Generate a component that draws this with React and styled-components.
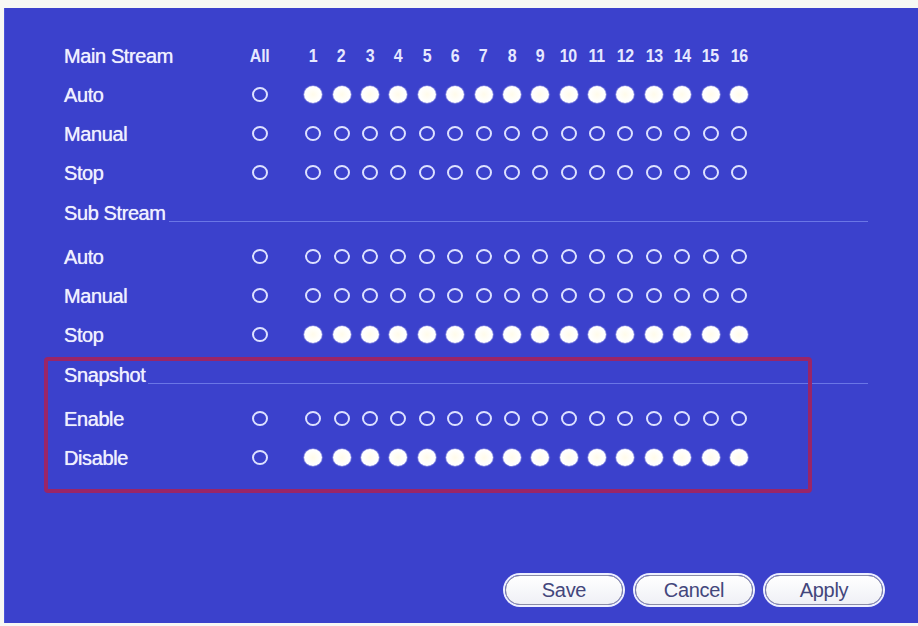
import React from "react";
import styled, { createGlobalStyle } from "styled-components";

const Global = createGlobalStyle`
  html, body { margin: 0; padding: 0; background: #f7f8f4; }
  body { font-family: "Liberation Sans", Arial, sans-serif; }
  * { box-sizing: border-box; }
`;

const Panel = styled.div`
  margin: 8px 0 0 4px;
  height: 615px;
  background: #3b41cc;
  border-left: 1px solid #4a55d8;
  display: flex;
  flex-direction: column;
  padding: 28px 0 0 59px;
`;

const Content = styled.div`
  display: flex;
  flex-direction: column;
  flex: 1;
`;

const Section = styled.div`
  position: relative;
  display: flex;
  flex-direction: column;
`;

const Row = styled.div`
  display: flex;
  align-items: center;
  height: 39px;
`;

const Label = styled.div`
  width: 182px;
  font-size: 20px;
  line-height: 22px;
  color: #eef0ff;
  letter-spacing: -0.4px;
  text-shadow: 0 0 0.7px rgba(255, 255, 255, 0.9);
`;

const AllCell = styled.div`
  width: 28px;
  display: flex;
  justify-content: center;
  align-items: center;
`;

const Channels = styled.div`
  margin-left: 25px;
  display: grid;
  grid-template-columns: repeat(16, 28.4px);
  align-items: center;
  justify-items: center;
`;

const Num = styled.span`
  display: inline-block;
  font-size: 19px;
  line-height: 22px;
  font-weight: 700;
  color: #e6e8ff;
  letter-spacing: -0.3px;
  transform: scaleX(0.84);
  white-space: nowrap;
`;

const Radio = styled.span`
  display: block;
  border-radius: 50%;
  ${(p) =>
    p.$on
      ? `width: 18px; height: 17px; background: radial-gradient(circle, #fffbea 0%, #ffffff 60%, #f4f4ff 100%); box-shadow: 0 0 1px 0.5px rgba(255,255,255,0.6);`
      : `width: 16px; height: 15px; border: 2.3px solid #dde1ff; background: transparent;`}
`;

const HeaderRow = styled.div`
  display: flex;
  align-items: flex-start;
  height: 45px;
  padding-top: 10px;
  width: 804px;
`;

const HeaderLabel = styled.div`
  font-size: 20px;
  line-height: 22px;
  color: #eef0ff;
  letter-spacing: -0.4px;
  text-shadow: 0 0 0.7px rgba(255, 255, 255, 0.9);
`;

const Rule = styled.div`
  flex: 1;
  height: 1px;
  margin-top: 19px;
  margin-left: 3px;
  background: #6a76e6;
`;

const Highlight = styled.div`
  position: absolute;
  left: -20px;
  top: 3px;
  width: 768px;
  height: 136px;
  border: 4px solid #9a2568;
  border-radius: 4px;
  pointer-events: none;
`;

const ButtonBar = styled.div`
  display: flex;
  justify-content: flex-end;
  gap: 12px;
  padding: 0 35px 18px 0;
`;

const Button = styled.button`
  width: 118px;
  height: 30px;
  border-radius: 15px;
  border: 1.5px solid #8a8ca6;
  background: linear-gradient(#ffffff, #eff0f6);
  box-shadow: 0 0 0 2px #eef0ff;
  color: #43467c;
  font-family: "Liberation Sans", Arial, sans-serif;
  font-size: 20px;
  line-height: 26px;
  padding: 0;
  letter-spacing: -0.3px;
`;

const CH = Array.from({ length: 16 }, (_, i) => i + 1);

function ChoiceRow({ label, on }) {
  return (
    <Row>
      <Label>{label}</Label>
      <AllCell>
        <Radio />
      </AllCell>
      <Channels>
        {CH.map((c) => (
          <Radio key={c} $on={on} />
        ))}
      </Channels>
    </Row>
  );
}

function Header({ label }) {
  return (
    <HeaderRow>
      <HeaderLabel>{label}</HeaderLabel>
      <Rule />
    </HeaderRow>
  );
}

export default function App() {
  return (
    <>
      <Global />
      <Panel>
        <Content>
          <Section>
            <Row>
              <Label>Main Stream</Label>
              <AllCell>
                <Num>All</Num>
              </AllCell>
              <Channels>
                {CH.map((c) => (
                  <Num key={c}>{c}</Num>
                ))}
              </Channels>
            </Row>
            <ChoiceRow label="Auto" on />
            <ChoiceRow label="Manual" />
            <ChoiceRow label="Stop" />
          </Section>
          <Section>
            <Header label="Sub Stream" />
            <ChoiceRow label="Auto" />
            <ChoiceRow label="Manual" />
            <ChoiceRow label="Stop" on />
          </Section>
          <Section>
            <Header label="Snapshot" />
            <ChoiceRow label="Enable" />
            <ChoiceRow label="Disable" on />
            <Highlight />
          </Section>
        </Content>
        <ButtonBar>
          <Button>Save</Button>
          <Button>Cancel</Button>
          <Button>Apply</Button>
        </ButtonBar>
      </Panel>
    </>
  );
}
